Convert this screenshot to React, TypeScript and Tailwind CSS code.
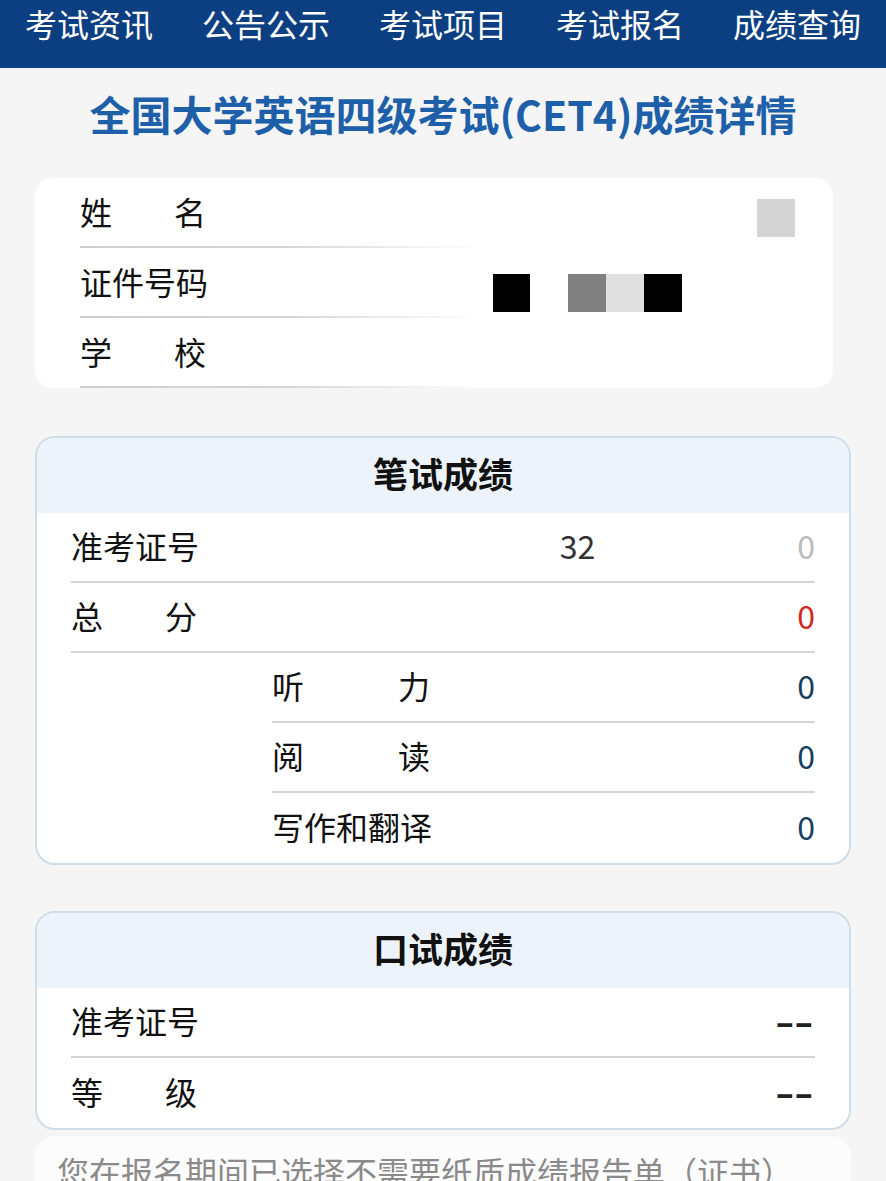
import React from "react";

const font = { fontFamily: '"Noto Sans CJK SC", "Noto Sans", sans-serif' };

function Spread({ text, width }: { text: string; width: string }) {
  return (
    <span className={`flex justify-between ${width}`}>
      {text.split("").map((c, i) => (
        <span key={i}>{c}</span>
      ))}
    </span>
  );
}

function Row({
  label,
  value,
  line = true,
  indent = false,
}: {
  label: React.ReactNode;
  value: React.ReactNode;
  line?: boolean;
  indent?: boolean;
}) {
  return (
    <div className={`flex h-[70px] items-center justify-between pb-[4px] ${indent ? "ml-[201px]" : ""} ${line ? "border-b-2 border-[#d4d4d4]" : ""}`}>
      <div className="text-[32px] text-[#111]">{label}</div>
      <div className="text-[32px]">{value}</div>
    </div>
  );
}

function Dash() {
  return (
    <span
      style={{ fontFamily: '"Liberation Sans", sans-serif' }}
      className="inline-block origin-right scale-x-[1.8] pr-[1px] font-bold text-[#222]"
    >
      --
    </span>
  );
}

export default function App() {
  return (
    <div style={font} className="min-h-[1181px] w-[886px] overflow-hidden bg-[#f5f5f6]">
      {/* nav */}
      <div className="flex h-[68px] items-start justify-between bg-[#0c3f82] px-[25px] pt-[3px] text-[32px] leading-[40px] text-white">
        <span>考试资讯</span>
        <span>公告公示</span>
        <span>考试项目</span>
        <span>考试报名</span>
        <span>成绩查询</span>
      </div>

      {/* title */}
      <div className="pt-[17px] text-center text-[41px] font-bold leading-[56px] text-[#1d5fa8]">
        全国大学英语四级考试(CET4)成绩详情
      </div>

      {/* personal info */}
      <div className="relative ml-[35px] mt-[37px] w-[798px] rounded-[18px] bg-white pl-[45px]">
        {[
          { label: <Spread text="姓名" width="w-[126px]" /> },
          { label: "证件号码" },
          { label: <Spread text="学校" width="w-[126px]" /> },
        ].map((r, i) => (
          <div key={i} className="flex h-[70px] flex-col justify-between">
            <div className="flex flex-1 items-center pb-[3px] text-[32px] text-[#111]">{r.label}</div>
            <div className="h-[2px] w-[400px] bg-gradient-to-r from-[#cfcfcf] via-[#d4d4d4] to-transparent" />
          </div>
        ))}
        <div className="absolute left-[722px] top-[21px] h-[38px] w-[38px] bg-[#d4d4d4]" />
        <div className="absolute left-[458px] top-[96px] flex h-[38px]">
          <div className="h-[38px] w-[37px] bg-black" />
          <div className="ml-[38px] h-[38px] w-[38px] bg-[#808080]" />
          <div className="h-[38px] w-[38px] bg-[#e0e0e0]" />
          <div className="h-[38px] w-[38px] bg-black" />
        </div>
      </div>

      {/* written */}
      <div className="ml-[35px] mt-[48px] w-[816px] overflow-hidden rounded-[20px] border-2 border-[#cfdde8] bg-white">
        <div className="flex h-[75px] items-center justify-center bg-[#edf3fa] pb-[4px] text-[35px] font-bold text-[#111]">
          笔试成绩
        </div>
        <div className="px-[34px]">
          <Row
            label="准考证号"
            value={
              <span className="flex text-[#333]">
                <span>32</span>
                <span className="w-[202px]" />
                <span className="text-[#bbb]">0</span>
              </span>
            }
          />
          <Row label={<Spread text="总分" width="w-[126px]" />} value={<span className="text-[#d2261c]">0</span>} />
          <Row indent label={<Spread text="听力" width="w-[158px]" />} value={<span className="text-[#173d60]">0</span>} />
          <Row indent label={<Spread text="阅读" width="w-[158px]" />} value={<span className="text-[#173d60]">0</span>} />
          <Row indent line={false} label="写作和翻译" value={<span className="text-[#173d60]">0</span>} />
        </div>
      </div>

      {/* oral */}
      <div className="ml-[35px] mt-[46px] w-[816px] overflow-hidden rounded-[20px] border-2 border-[#cfdde8] bg-white">
        <div className="flex h-[75px] items-center justify-center bg-[#edf3fa] pb-[4px] text-[35px] font-bold text-[#111]">
          口试成绩
        </div>
        <div className="px-[34px]">
          <Row label="准考证号" value={<Dash />} />
          <Row line={false} label={<Spread text="等级" width="w-[126px]" />} value={<Dash />} />
        </div>
      </div>

      {/* note */}
      <div className="ml-[35px] mt-[6px] h-[120px] w-[816px] rounded-[20px] bg-[#fcfcfc] px-[22px] pt-[12px] text-[32px] leading-[46px] text-[#8a8a8a]">
        您在报名期间已选择不需要纸质成绩报告单（证书）
      </div>
    </div>
  );
}
